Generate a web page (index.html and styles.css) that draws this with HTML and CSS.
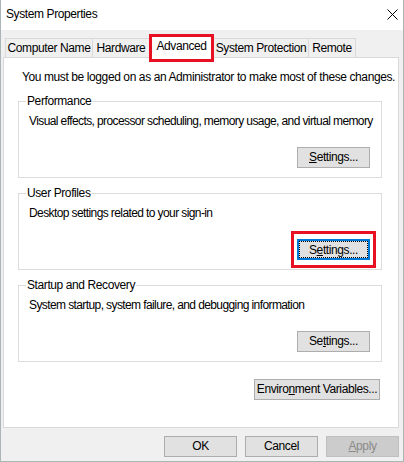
FILE: index.html
```html
<!DOCTYPE html>
<html lang="en">
<head>
    <meta charset="UTF-8">
    <title>System Properties</title>
    <link rel="stylesheet" href="styles.css">
</head>
<body>
    <div class="window">
        <div class="titlebar">
            <span class="title">System Properties</span>
            <svg class="close" width="11" height="11" viewBox="0 0 11 11">
                <path d="M0.5 0.5L10.5 10.5M10.5 0.5L0.5 10.5" stroke="#000" stroke-width="1" fill="none"/>
            </svg>
        </div>
        <div class="client">
            <div class="tabs">
                <div class="tab tab-cn">Computer Name</div>
                <div class="tab tab-hw">Hardware</div>
                <div class="tab tab-adv active">Advanced</div>
                <div class="tab tab-sp">System Protection</div>
                <div class="tab tab-rm">Remote</div>
            </div>
            <div class="panel">
                <p class="note">You must be logged on as an Administrator to make most of these changes.</p>

                <fieldset class="group">
                    <legend>Performance</legend>
                    <p>Visual effects, processor scheduling, memory usage, and virtual memory</p>
                    <div class="actions">
                        <button class="btn"><u>S</u>ettings...</button>
                    </div>
                </fieldset>

                <fieldset class="group">
                    <legend>User Profiles</legend>
                    <p>Desktop settings related to your sign-in</p>
                    <div class="actions">
                        <span class="mark">
                            <button class="btn focus">S<u>e</u>ttings...</button>
                        </span>
                    </div>
                </fieldset>

                <fieldset class="group">
                    <legend>Startup and Recovery</legend>
                    <p>System startup, system failure, and debugging information</p>
                    <div class="actions">
                        <button class="btn">Se<u>t</u>tings...</button>
                    </div>
                </fieldset>

                <div class="env">
                    <button class="btn wide">Enviro<u>n</u>ment Variables...</button>
                </div>
            </div>
            <div class="footer">
                <button class="btn">OK</button>
                <button class="btn">Cancel</button>
                <button class="btn disabled"><u>A</u>pply</button>
            </div>
        </div>
    </div>
</body>
</html>
```

FILE: styles.css
```css
* {
    box-sizing: border-box;
}

body {
    margin: 0;
    font-family: 'Liberation Sans', Arial, sans-serif;
    font-size: 12px;
    letter-spacing: -0.4px;
    white-space: nowrap;
    color: #000;
    background-color: #fff;
}

.window {
    width: 404px;
    height: 462px;
    border: 1px solid #aab5b7;
    border-top: none;
    background-color: #f0f0f0;
    display: flex;
    flex-direction: column;
}

.titlebar {
    height: 30px;
    background-color: #fff;
    display: flex;
    align-items: center;
    justify-content: space-between;
    padding: 0 5px 2px 5px;
}

.close {
    display: block;
}

.client {
    flex: 1;
    display: flex;
    flex-direction: column;
    padding: 0 4px 0 2px;
}

/* tab strip */
.tabs {
    height: 27px;
    display: flex;
    align-items: flex-end;
    padding-left: 2px;
    z-index: 1;
}

.tab {
    height: 19px;
    border: 1px solid #d9d9d9;
    border-bottom: none;
    margin-left: -1px;
    padding-top: 1px;
    line-height: 16px;
    text-align: center;
    background-color: #f0f0f0;
}

.tab-cn { width: 88px; margin-left: 0; }
.tab-hw { width: 58px; }
.tab-adv { width: 65px; }
.tab-sp { width: 96px; }
.tab-rm { width: 48px; }

.tab.active {
    height: 23px;
    margin-bottom: -1px;
    padding-top: 2px;
    background-color: #fff;
    position: relative;
}

.tab.active::after {
    content: "";
    position: absolute;
    left: -1px;
    right: -1px;
    top: -2px;
    bottom: -4px;
    border: 3px solid #e81123;
}

/* page */
.panel {
    height: 371px;
    background-color: #fff;
    border: 1px solid #d9d9d9;
    padding: 11px 16px 0 14px;
    display: flex;
    flex-direction: column;
}

.note {
    margin: 0 0 8px 4px;
    line-height: 16px;
}

.group {
    margin: 0 0 7px;
    border: 1px solid #dcdcdc;
    padding: 0 11px 9px 9px;
    min-inline-size: 0;
}

.group legend {
    padding: 0 1px;
    margin-left: -2px;
    line-height: 16px;
}

.group p {
    margin: 4px 0 0 1px;
    line-height: 16px;
    letter-spacing: -0.6px;
}

.actions {
    display: flex;
    justify-content: flex-end;
    margin-top: 18px;
}

.env {
    display: flex;
    justify-content: flex-end;
    margin-top: 10px;
    padding-right: 2px;
}

.footer {
    display: flex;
    justify-content: flex-end;
    gap: 8px;
    margin-top: 8px;
}

/* buttons */
.btn {
    width: 73px;
    height: 21px;
    padding: 0;
    border: 1px solid #adadad;
    background-color: #e1e1e1;
    font-family: inherit;
    font-size: 12px;
    letter-spacing: inherit;
    line-height: 19px;
    white-space: nowrap;
    color: #000;
}

.btn.wide {
    width: 126px;
}

.btn.focus {
    border: 2px solid #0078d7;
    outline: 1px dotted #000;
    outline-offset: -3px;
}

.btn.disabled {
    background-color: #cccccc;
    border-color: #bfbfbf;
    color: #8a8a8a;
}

.mark {
    display: flex;
    position: relative;
}

.mark::after {
    content: "";
    position: absolute;
    left: -6px;
    right: -6px;
    top: -8px;
    bottom: -8px;
    border: 3px solid #e81123;
}
```
